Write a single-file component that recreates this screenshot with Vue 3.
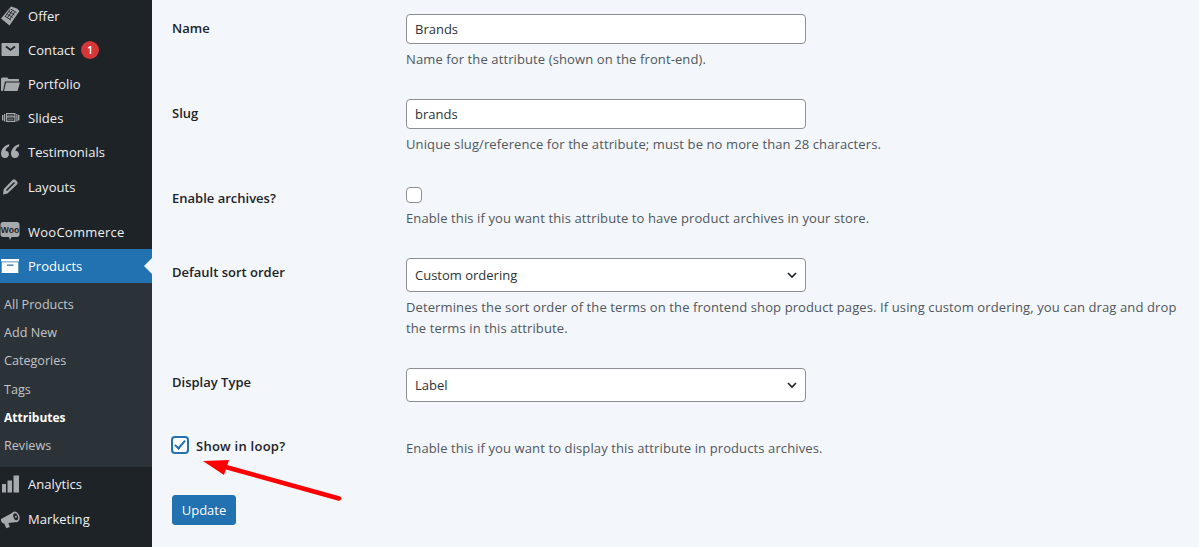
<template>
  <div class="page">
    <aside class="sidebar">
      <ul class="menu menu-top">
        <li v-for="item in topItems" :key="item.label" class="menu-item" :class="item.cls">
          <svg class="menu-icon" viewBox="0 0 20 20" v-html="item.icon"></svg>
          <span class="menu-label">{{ item.label }}</span>
          <span v-if="item.badge" class="badge">{{ item.badge }}</span>
        </li>
      </ul>
      <ul class="submenu">
        <li v-for="sub in subItems" :key="sub" :class="{ current: sub === 'Attributes' }">{{ sub }}</li>
      </ul>
      <ul class="menu">
        <li v-for="item in bottomItems" :key="item.label" class="menu-item" :class="item.cls">
          <svg class="menu-icon" viewBox="0 0 20 20" v-html="item.icon"></svg>
          <span class="menu-label">{{ item.label }}</span>
        </li>
      </ul>
    </aside>

    <main class="content">
      <div class="row row-name">
        <label class="row-label">Name</label>
        <div class="row-field">
          <input class="text-input" type="text" value="Brands" />
          <p class="hint">Name for the attribute (shown on the front-end).</p>
        </div>
      </div>
      <div class="row row-slug">
        <label class="row-label">Slug</label>
        <div class="row-field">
          <input class="text-input" type="text" value="brands" />
          <p class="hint">Unique slug/reference for the attribute; must be no more than 28 characters.</p>
        </div>
      </div>
      <div class="row row-archives">
        <label class="row-label">Enable archives?</label>
        <div class="row-field">
          <input class="check" type="checkbox" />
          <p class="hint">Enable this if you want this attribute to have product archives in your store.</p>
        </div>
      </div>
      <div class="row row-sort">
        <label class="row-label">Default sort order</label>
        <div class="row-field">
          <select class="select-input">
            <option>Custom ordering</option>
          </select>
          <p class="hint">Determines the sort order of the terms on the frontend shop product pages. If using custom ordering, you can drag and drop the terms in this attribute.</p>
        </div>
      </div>
      <div class="row row-display">
        <label class="row-label">Display Type</label>
        <div class="row-field">
          <select class="select-input">
            <option>Label</option>
          </select>
        </div>
      </div>
      <div class="row row-loop">
        <label class="row-label loop-label">
          <input class="check checked" type="checkbox" checked />
          Show in loop?
        </label>
        <div class="row-field">
          <p class="hint">Enable this if you want to display this attribute in products archives.</p>
        </div>
      </div>
      <button class="update" type="button">Update</button>
    </main>

    <!-- annotation drawn over the form -->
    <svg class="arrow" viewBox="0 0 1199 547">
      <path d="M339 498.500 L222 466" stroke="#fe0000" stroke-width="4.500" stroke-linecap="round" fill="none" />
      <path d="M203 461 L229 460 L224 475 Z" fill="#fe0000" />
    </svg>
  </div>
</template>

<script setup>
const icons = {
  offer: '<path d="M11 0.500 17 2.500 19.500 5 9.500 19.500 1 12.500Z"/><path d="M10.800 3 16.300 6.500M9 5.500 14.500 9M7.200 8 12.700 11.500M5.400 10.500 10.900 14M10 3.500 5 11M12.300 4.500 7.300 12M14.600 6 9.600 13.500" stroke="#1d2327" stroke-width=".9" fill="none"/>',
  mail: '<path d="M2.500 3h15.500c.6 0 1 .4 1 1v11c0 .6-.4 1-1 1H2.500c-.6 0-1-.4-1-1V4c0-.6.4-1 1-1Z"/><path d="M6 6.500 10.500 10 15 6.500" stroke="#1d2327" stroke-width="1.700" fill="none"/>',
  folder: '<path d="M1 5.500C1 4.300 1.500 3.500 2.500 3.500h5l1 1.500H18c.6 0 1 .4 1 1V7.500H5L3 17H2c-.6 0-1-.4-1-1Z"/><path d="M6 8.500h14l-2.500 8.500H4Z"/>',
  slides: '<path d="M6 5h9.500v9H6Zm1.200 1.200v2h7.100v-2Zm0 3.400v3.200h7.100V9.600Z" fill-rule="evenodd"/><path d="M8 7h5.500v.6H8ZM8 10.800h5.500v.8H8Z"/><path d="M2 7h1.400v5.500H2ZM4 6h1.200v7.500H4ZM16.300 6h1.200v7.500h-1.200ZM18 7h1.400v5.500H18Z"/>',
  quote: '<path d="M9.200 2.200C4.500 3.500 1 7 1 11.500 1 14.500 2.600 16 5 16c2.300 0 3.900-1.500 3.900-3.700 0-2.200-1.600-3.500-3.400-3.500.2-2.300 1.700-3.900 3.700-4.600Z"/><path d="M19.200 2.200C14.500 3.500 11 7 11 11.500c0 3 1.600 4.500 4 4.500 2.300 0 3.900-1.500 3.900-3.700 0-2.200-1.600-3.500-3.400-3.500.2-2.300 1.700-3.900 3.700-4.600Z"/>',
  pen: '<path d="M13 2.500 15 2.500 17.500 5 17.500 7 7.500 16.500 3 17.500 3.800 12Z"/><path d="M6.500 13.500 14.500 5.500" stroke="#1d2327" stroke-width="1.600" fill="none"/>',
  woo: '<path d="M3 0h14c1.500 0 2.500 1 2.500 2.500v10c0 1.500-1 2.500-2.500 2.500h-5.500l-1.500 3-1-3H3C1.500 15 .5 14 .5 12.500v-10C.5 1 1.500 0 3 0Z"/><text x="10" y="10.500" text-anchor="middle" font-size="8.500" font-weight="700" font-family="Liberation Sans, sans-serif" fill="#1d2327">Woo</text>',
  box: '<path d="M1 3h18v2.600H1ZM1.700 6.300h16.600V17H1.700Zm5.300 2.300v1.100h6.500V8.600Z" fill-rule="evenodd"/>',
  chart: '<path d="M2 10h4v8.500H2ZM7.500 6.500H12v12H7.500ZM13.500 1.500H19v17h-5.500Z"/>',
  mega: '<path d="M1 10 13 3.500 17 13 4 14.500C2 14.500.5 12 1 10Z"/><path d="M4 14 8.200 13.500 9.800 18 6.300 19.300Z"/><ellipse cx="15.500" cy="7.800" rx="3.900" ry="5.500" transform="rotate(-20 15.500 7.800)"/><ellipse cx="15.700" cy="7.800" rx="2.200" ry="3.600" transform="rotate(-20 15.700 7.800)" fill="#1d2327"/><circle cx="15.900" cy="7.800" r="1"/>'
}

const topItems = [
  { label: 'Offer', icon: icons.offer, cls: 'first' },
  { label: 'Contact', icon: icons.mail, badge: 1 },
  { label: 'Portfolio', icon: icons.folder },
  { label: 'Slides', icon: icons.slides },
  { label: 'Testimonials', icon: icons.quote },
  { label: 'Layouts', icon: icons.pen, cls: 'layouts' },
  { label: 'WooCommerce', icon: icons.woo, cls: 'woo' },
  { label: 'Products', icon: icons.box, cls: 'active' }
]

const subItems = ['All Products', 'Add New', 'Categories', 'Tags', 'Attributes', 'Reviews']

const bottomItems = [
  { label: 'Analytics', icon: icons.chart },
  { label: 'Marketing', icon: icons.mega, cls: 'marketing' }
]
</script>

<style>
html,
body {
  margin: 0;
  overflow: hidden;
  background: #f3f6fa;
}
</style>

<style scoped>
.page {
  position: relative;
  display: flex;
  width: 1199px;
  height: 547px;
  overflow: hidden;
  font-family: "Open Sans", "Noto Sans", sans-serif;
  font-size: 13px;
  color: #1d2327;
}

.sidebar {
  flex: 0 0 152px;
  background: #1d2327;
  color: #f0f0f1;
}

.menu {
  list-style: none;
  margin: 0;
  padding: 0;
}

.menu-item {
  display: flex;
  align-items: center;
  height: 34px;
  position: relative;
  font-size: 13px;
}

.menu-label {
  margin-left: 8px;
  letter-spacing: 0.05px;
}

.menu-icon {
  flex: 0 0 20px;
  width: 20px;
  height: 20px;
  fill: #a7aaad;
}

.first {
  margin-top: -1px;
}

.layouts {
  height: 35px;
  margin-bottom: 11px;
}

.woo .menu-label {
  letter-spacing: 0.25px;
}

.marketing {
  height: 35px;
}

.active {
  background: #2271b1;
  color: #fff;
}

.active .menu-icon {
  fill: #fff;
}

.active::after {
  content: "";
  position: absolute;
  right: 0;
  top: 9px;
  border: 8px solid transparent;
  border-right-color: #f3f6fa;
}

.badge {
  width: 18px;
  height: 18px;
  margin-left: 6px;
  border-radius: 50%;
  background: #d63638;
  color: #fff;
  font-size: 10px;
  font-weight: 600;
  line-height: 18px;
  text-align: center;
}

.submenu {
  list-style: none;
  margin: 0;
  padding: 8px 0 7px 4px;
  background: #2c3338;
  color: #c3c4c7;
  font-size: 12.6px;
}

.submenu li {
  height: 28.2px;
  line-height: 28px;
}

.submenu .current {
  color: #fff;
  font-size: 12px;
  font-weight: 700;
}

.content {
  flex: 1;
  padding: 14px 0 0 20px;
  background: #f3f6fa;
}

.row {
  display: flex;
}

.row-label {
  flex: 0 0 234px;
  font-weight: 600;
  line-height: 18px;
  padding-top: 5px;
}

.row-field {
  flex: 1;
  min-width: 0;
}

.row-name {
  height: 85px;
}

.row-slug {
  height: 88px;
}

.row-archives {
  height: 71px;
}

.row-archives .row-label {
  padding-top: 2px;
}

.row-sort {
  height: 110px;
}

.row-display {
  height: 69px;
}

.row-loop {
  height: 58px;
}

.text-input,
.select-input {
  display: block;
  box-sizing: border-box;
  width: 400px;
  margin: 0;
  border: 1px solid #8c8f94;
  border-radius: 4px;
  background-color: #fff;
  color: #2c3338;
  font: inherit;
}

.text-input {
  height: 30px;
  padding: 0 8px;
}

.select-input {
  height: 34px;
  padding: 0 24px 0 8px;
  appearance: none;
  background-image: url("data:image/svg+xml,%3Csvg xmlns='http://www.w3.org/2000/svg' viewBox='0 0 20 20'%3E%3Cpath d='M5 7.500 10 12.500 15 7.500' fill='none' stroke='%231d2327' stroke-width='2'/%3E%3C/svg%3E");
  background-repeat: no-repeat;
  background-position: right 5px center;
  background-size: 16px 16px;
}

.hint {
  margin: 5px 0 0;
  max-width: 780px;
  color: #50575e;
  font-size: 13px;
  line-height: 21px;
  letter-spacing: 0.11px;
}

.check {
  display: block;
  box-sizing: border-box;
  width: 16px;
  height: 16px;
  margin: 0;
  border: 1px solid #8c8f94;
  border-radius: 4px;
  background: #fff;
  appearance: none;
}

.checked {
  position: relative;
  top: -1px;
  left: -1px;
  flex: 0 0 18px;
  width: 18px;
  height: 18px;
  border: 2px solid #2271b1;
}

.checked::before {
  content: "";
  position: absolute;
  left: 4px;
  top: 0;
  width: 4px;
  height: 9px;
  border: solid #2271b1;
  border-width: 0 2px 2px 0;
  transform: rotate(40deg);
}

.loop-label {
  display: flex;
  align-items: center;
  gap: 6px;
  align-self: flex-start;
  height: 18px;
  padding-top: 0;
  letter-spacing: 0.25px;
}

.row-loop .hint {
  margin-top: 1px;
}

.update {
  display: block;
  width: 64px;
  height: 30px;
  padding: 0;
  border: 1px solid #2271b1;
  border-radius: 3px;
  background: #2271b1;
  color: #fff;
  font: inherit;
}

.arrow {
  position: absolute;
  left: 0;
  top: 0;
  width: 1199px;
  height: 547px;
  pointer-events: none;
}
</style>
